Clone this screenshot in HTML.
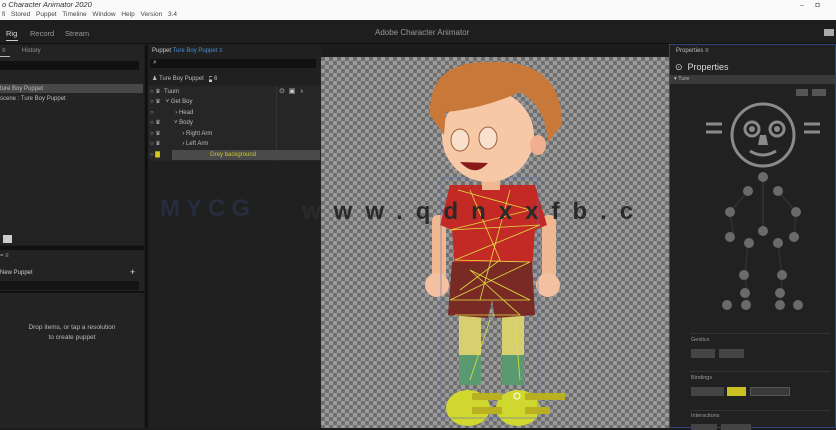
<!DOCTYPE html>
<html><head><meta charset="utf-8"><style>
*{margin:0;padding:0;box-sizing:border-box}
body{width:836px;height:428px;overflow:hidden;background:#1c1c1c;font-family:"Liberation Sans",sans-serif;color:#aaa;font-size:7px;position:relative}
.a{position:absolute}
.row{position:absolute;left:0;height:10px;font-size:6px;color:#bbb;line-height:10px}
</style></head><body>
<div class="a" style="left:0;top:0;width:836px;height:20px;background:#fafafa"></div>
<div class="a" style="left:2px;top:0;font-size:7.5px;font-style:italic;color:#333">o Character Animator 2020</div>
<div class="a" style="left:2px;top:11px;font-size:6.5px;color:#444;word-spacing:4px">fi Stored Puppet Timeline Window Help Version 3.4</div>
<div class="a" style="left:800px;top:2px;font-size:7px;color:#555">–&nbsp;&nbsp;&nbsp;&nbsp;&nbsp;&nbsp;◘</div>
<div class="a" style="left:0;top:20px;width:836px;height:24px;background:#1e1e1e;border-bottom:1px solid #111"></div>
<div class="a" style="left:6px;top:29px;font-size:7.5px;color:#ddd">Rig</div>
<div class="a" style="left:6px;top:40px;width:12px;height:1px;background:#ccc"></div>
<div class="a" style="left:30px;top:29px;font-size:7.5px;color:#999">Record</div>
<div class="a" style="left:65px;top:29px;font-size:7.5px;color:#999">Stream</div>
<div class="a" style="left:375px;top:28px;font-size:8px;color:#999">Adobe Character Animator</div>
<div class="a" style="left:824px;top:29px;width:10px;height:7px;background:#aaa"></div>
<div class="a" style="left:0;top:45px;width:144px;height:200px;background:#232323"></div>
<div class="a" style="left:2px;top:48px;font-size:6px;color:#aaa">≡</div>
<div class="a" style="left:0;top:56px;width:10px;height:1px;background:#bbb"></div>
<div class="a" style="left:22px;top:48px;font-size:6px;color:#999">History</div>
<div class="a" style="left:0;top:61px;width:139px;height:9px;background:#111"></div>
<div class="a" style="left:0;top:84px;width:143px;height:9px;background:#484848"></div>
<div class="row" style="top:84px;left:0">ture Boy Puppet</div>
<div class="row" style="top:94px;left:0">scene : Ture Boy Puppet</div>
<div class="a" style="left:3px;top:235px;width:9px;height:8px;background:#ccc"></div>
<div class="a" style="left:0;top:246px;width:144px;height:4px;background:#111"></div>
<div class="a" style="left:0;top:250px;width:144px;height:178px;background:#232323"></div>
<div class="a" style="left:0;top:253px;font-size:6px">= ≡</div>
<div class="a" style="left:0;top:270px;font-size:6px;color:#ccc">New Puppet</div>
<div class="a" style="left:130px;top:267px;font-size:9px;color:#ddd">+</div>
<div class="a" style="left:0;top:281px;width:139px;height:9px;background:#141414"></div>
<div class="a" style="left:0;top:291px;width:144px;height:2px;background:#111"></div>
<div class="a" style="left:0;top:323px;width:144px;text-align:center;font-size:6.5px;color:#bbb;line-height:10px">Drop items, or tap a resolution<br>to create puppet</div>
<div class="a" style="left:145px;top:45px;width:3px;height:383px;background:#111"></div>
<div class="a" style="left:148px;top:45px;width:173px;height:383px;background:#202020"></div>
<div class="a" style="left:152px;top:48px;font-size:6px;color:#ccc">Puppet <span style="color:#4a8fd8">Ture Boy Puppet ≡</span></div>
<div class="a" style="left:150px;top:59px;width:166px;height:9px;background:#111"></div>
<div class="a" style="left:153px;top:59px;font-size:7px;color:#ccc">⌕</div>
<div class="a" style="left:152px;top:75px;font-size:6px;color:#bbb">♟ Ture Boy Puppet &nbsp; <span style="background:#ccc;color:#222">■</span> 6</div>
<div class="a" style="left:148px;top:86px;width:172px;height:75px;background:#262626"></div>
<div class="a" style="left:276px;top:86px;width:1px;height:75px;background:#333"></div>
<div class="row" style="top:87px;left:150px">○ ♛ &nbsp;Tuum</div>
<div class="a" style="left:279px;top:87px;font-size:7px;color:#ccc">⊙ &nbsp;▣ &nbsp;♁</div>
<div class="row" style="top:97px;left:150px">○ ♛ &nbsp;&nbsp;˅ Get Boy</div>
<div class="row" style="top:108px;left:150px">○ &nbsp;&nbsp;&nbsp;&nbsp;&nbsp;&nbsp;&nbsp;&nbsp;&nbsp;&nbsp;&nbsp;&nbsp;› Head</div>
<div class="row" style="top:118px;left:150px">○ ♛ &nbsp;&nbsp;&nbsp;&nbsp;&nbsp;&nbsp;&nbsp;˅ Body</div>
<div class="row" style="top:129px;left:150px">○ ♛ &nbsp;&nbsp;&nbsp;&nbsp;&nbsp;&nbsp;&nbsp;&nbsp;&nbsp;&nbsp;&nbsp;&nbsp;› Right Arm</div>
<div class="row" style="top:139px;left:150px">○ ♛ &nbsp;&nbsp;&nbsp;&nbsp;&nbsp;&nbsp;&nbsp;&nbsp;&nbsp;&nbsp;&nbsp;&nbsp;› Left Arm</div>
<div class="a" style="left:172px;top:150px;width:148px;height:10px;background:#4a4a4a"></div>
<div class="row" style="top:150px;left:150px">○ <span style="color:#d8c820">▇</span></div>
<div class="a" style="left:210px;top:150px;font-size:6px;color:#d0c830;line-height:10px">Grey background</div>
<div class="a" style="left:321px;top:45px;width:348px;height:383px;background-color:#9a9a9a;background-image:linear-gradient(45deg,#6f6f6f 25%,transparent 25%,transparent 75%,#6f6f6f 75%),linear-gradient(45deg,#6f6f6f 25%,transparent 25%,transparent 75%,#6f6f6f 75%);background-size:8px 8px;background-position:0 0,4px 4px"></div>
<div class="a" style="left:321px;top:45px;width:348px;height:12px;background:#1c1c1c"></div>
<svg class="a" style="left:321px;top:45px" width="348" height="383" viewBox="321 45 348 383">
<rect x="459" y="310" width="22" height="75" fill="#d8d070"/>
<rect x="502" y="310" width="22" height="75" fill="#d8d070"/>
<rect x="459" y="355" width="22" height="30" fill="#5a9a70"/>
<rect x="502" y="355" width="22" height="30" fill="#5a9a70"/>
<ellipse cx="468" cy="408" rx="22" ry="18" fill="#d0d830"/>
<ellipse cx="518" cy="408" rx="22" ry="18" fill="#d0d830"/>
<rect x="432" y="215" width="14" height="65" rx="6" fill="#f0b890"/>
<rect x="542" y="215" width="14" height="65" rx="6" fill="#f0b890"/>
<ellipse cx="437" cy="285" rx="12" ry="12" fill="#f3c0a0"/>
<ellipse cx="548" cy="285" rx="12" ry="12" fill="#f3c0a0"/>
<path d="M450 185 L535 185 L547 225 L535 230 L532 268 L455 268 L452 230 L440 225 Z" fill="#c42a25"/>
<path d="M452 262 L532 262 L535 315 L495 318 L492 300 L488 318 L448 315 Z" fill="#7a2a25"/>
<g stroke="#e0e040" stroke-width="0.8" fill="none">
<path d="M458 190 L530 210 L450 230 L540 225 L455 260 L530 262 L450 300 L530 300 L470 270 L520 315 L455 315 M470 190 L500 260 L460 290 M510 190 L480 300 M490 320 L470 380 M515 320 L520 380"/>
</g>
<rect x="441" y="178" width="97" height="240" fill="none" stroke="#6070c0" stroke-width="0.6"/>
<rect x="482" y="168" width="18" height="22" fill="#f0b890"/>
<ellipse cx="488" cy="136" rx="46" ry="46" fill="#f6c8a5"/>
<ellipse cx="538" cy="145" rx="8" ry="10" fill="#f0b090"/>
<path d="M430 115 Q428 60 492 62 Q562 60 562 125 L548 142 Q545 105 520 92 Q485 108 446 112 L444 135 Z" fill="#c87838"/>
<ellipse cx="460" cy="140" rx="9" ry="11" fill="#f8e0cc" stroke="#a06040" stroke-width="1"/>
<ellipse cx="488" cy="138" rx="9" ry="11" fill="#f8e0cc" stroke="#a06040" stroke-width="1"/>
<path d="M460 162 Q475 178 488 163 Z" fill="#8a1a1a"/>
<rect x="472" y="393" width="30" height="7" fill="#b8b020"/>
<rect x="525" y="393" width="40" height="7" fill="#b8b020"/>
<rect x="472" y="407" width="30" height="7" fill="#b8b020"/>
<rect x="525" y="407" width="25" height="7" fill="#b8b020"/>
<circle cx="517" cy="396" r="3" fill="none" stroke="#fff" stroke-width="1"/>
</svg>
<div class="a" style="left:160px;top:195px;font-size:24px;font-weight:bold;color:rgba(60,80,150,0.25);letter-spacing:6px">MYCG</div>
<div class="a" style="left:302px;top:198px;font-size:24px;font-weight:bold;color:#2a2a2a;letter-spacing:13px;white-space:nowrap">www.qdnxxfb.c</div>
<div class="a" style="left:669px;top:44px;width:167px;height:384px;background:#212121;border:1px solid #2a4a7a"></div>
<div class="a" style="left:676px;top:48px;font-size:6px;color:#bbb">Properties ≡</div>
<div class="a" style="left:675px;top:62px;font-size:9px;color:#ddd">⊙ &nbsp;Properties</div>
<div class="a" style="left:670px;top:75px;width:165px;height:9px;background:#3a3a3a"></div>
<div class="a" style="left:674px;top:76px;font-size:5.5px;color:#bbb">▾ Ture</div>
<div class="a" style="left:796px;top:89px;width:12px;height:7px;background:#555"></div>
<div class="a" style="left:812px;top:89px;width:14px;height:7px;background:#555"></div>
<svg class="a" style="left:670px;top:95px" width="166" height="230">
<g fill="none" stroke="#8a8a8a" stroke-width="3">
<circle cx="93" cy="40" r="31"/>
<circle cx="82" cy="34" r="7"/><circle cx="107" cy="34" r="7"/>
</g>
<circle cx="82" cy="34" r="3" fill="#8a8a8a"/><circle cx="107" cy="34" r="3" fill="#8a8a8a"/>
<path d="M90 40 L96 40 L98 50 L88 50 Z" fill="#8a8a8a"/>
<path d="M80 56 Q93 64 106 56" stroke="#8a8a8a" stroke-width="3" fill="none"/>
<g stroke="#8a8a8a" stroke-width="3"><line x1="36" y1="29" x2="52" y2="29"/><line x1="36" y1="37" x2="52" y2="37"/><line x1="134" y1="29" x2="150" y2="29"/><line x1="134" y1="37" x2="150" y2="37"/></g>
<g stroke="#2e2e2e" stroke-width="2" fill="none"><path d="M93 82 V135 M78 96 L60 117 L64 142 M108 96 L126 117 L124 142 M78 147 L75 182 L79 210 M108 147 L112 182 L111 210"/></g>
<g fill="#6a6a6a">
<circle cx="93" cy="82" r="5"/><circle cx="78" cy="96" r="5"/><circle cx="108" cy="96" r="5"/>
<circle cx="60" cy="117" r="5"/><circle cx="126" cy="117" r="5"/><circle cx="93" cy="136" r="5"/>
<circle cx="60" cy="142" r="5"/><circle cx="124" cy="142" r="5"/><circle cx="79" cy="148" r="5"/><circle cx="108" cy="148" r="5"/>
<circle cx="74" cy="180" r="5"/><circle cx="112" cy="180" r="5"/><circle cx="75" cy="198" r="5"/><circle cx="110" cy="198" r="5"/>
<circle cx="57" cy="210" r="5"/><circle cx="76" cy="210" r="5"/><circle cx="110" cy="210" r="5"/><circle cx="128" cy="210" r="5"/>
</g>
</svg>
<div class="a" style="left:690px;top:333px;width:140px;height:1px;background:#333"></div>
<div class="a" style="left:691px;top:337px;font-size:5.5px;color:#999">Gestics</div>
<div class="a" style="left:691px;top:349px;width:24px;height:9px;background:#444"></div>
<div class="a" style="left:719px;top:349px;width:25px;height:9px;background:#444"></div>
<div class="a" style="left:690px;top:371px;width:140px;height:1px;background:#333"></div>
<div class="a" style="left:691px;top:375px;font-size:5.5px;color:#999">Bindings</div>
<div class="a" style="left:691px;top:387px;width:33px;height:9px;background:#444"></div>
<div class="a" style="left:727px;top:387px;width:19px;height:9px;background:#c8c020"></div>
<div class="a" style="left:750px;top:387px;width:40px;height:9px;background:#3a3a3a;border:1px solid #555"></div>
<div class="a" style="left:690px;top:410px;width:140px;height:1px;background:#333"></div>
<div class="a" style="left:691px;top:413px;font-size:5.5px;color:#999">Interactions</div>
<div class="a" style="left:691px;top:424px;width:26px;height:6px;background:#444"></div>
<div class="a" style="left:721px;top:424px;width:30px;height:6px;background:#444"></div>
</body></html>
